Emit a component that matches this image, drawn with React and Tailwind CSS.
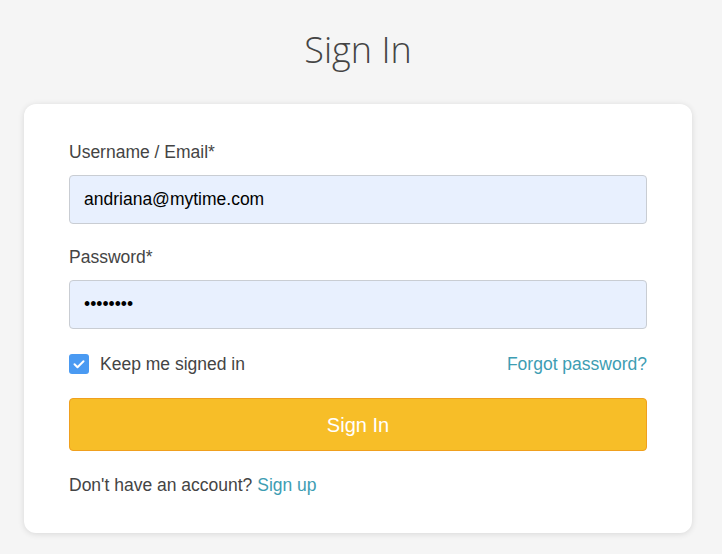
import React, { useState } from "react";

export default function App() {
  const [email, setEmail] = useState("andriana@mytime.com");
  const [password, setPassword] = useState("12345678");
  const [keep, setKeep] = useState(true);

  return (
    <div className="min-h-[554px] bg-[#f5f5f5] pl-6 pr-[30px] pt-[27px] pb-[22px] font-['Liberation_Sans',Arial,sans-serif]">
      <h1 className="text-center text-[36px] leading-[46px] font-light text-[#444] font-['Open_Sans',sans-serif]">
        Sign In
      </h1>
      <div className="mt-[31px] rounded-xl bg-white px-[45px] pt-[38px] pb-[38px] shadow-[0_1px_6px_rgba(0,0,0,0.12)]">
        <label className="block text-[17.5px] leading-5 text-[#444]">Username / Email*</label>
        <input
          className="mt-[13px] block h-[49px] w-full rounded border border-[#c9cdd3] bg-[#e8f0fe] px-[14px] text-[17.5px] text-black outline-none"
          value={email}
          onChange={(e) => setEmail(e.target.value)}
        />
        <label className="mt-[23px] block text-[17.5px] leading-5 text-[#444]">Password*</label>
        <input
          type="password"
          className="mt-[13px] block h-[49px] w-full rounded border border-[#c9cdd3] bg-[#e8f0fe] px-[14px] text-[17.5px] text-black outline-none"
          value={password}
          onChange={(e) => setPassword(e.target.value)}
        />
        <div className="mt-[22px] flex items-center justify-between">
          <label className="flex items-center gap-[11px] text-[17.5px] text-[#444]">
            <span
              onClick={() => setKeep(!keep)}
              className={
                keep
                  ? "flex h-5 w-5 items-center justify-center rounded-[3px] bg-[#4a9af2]"
                  : "flex h-5 w-5 items-center justify-center rounded-[3px] border border-[#999] bg-white"
              }
            >
              {keep && (
                <svg width="14" height="14" viewBox="0 0 14 14" fill="none">
                  <path d="M2.5 7.2l3 3 6-6" stroke="white" strokeWidth="2" strokeLinecap="round" strokeLinejoin="round" />
                </svg>
              )}
            </span>
            Keep me signed in
          </label>
          <a href="#" className="text-[17.5px] text-[#3d9db3]">
            Forgot password?
          </a>
        </div>
        <button className="mt-[21px] block h-[53px] w-full rounded border border-[#f0a01e] bg-[#f7be28] text-[20px] leading-none text-white">
          Sign In
        </button>
        <p className="mt-[24px] text-[17.5px] leading-5 text-[#444]">
          Don't have an account? <a href="#" className="text-[#3d9db3]">Sign up</a>
        </p>
      </div>
    </div>
  );
}
